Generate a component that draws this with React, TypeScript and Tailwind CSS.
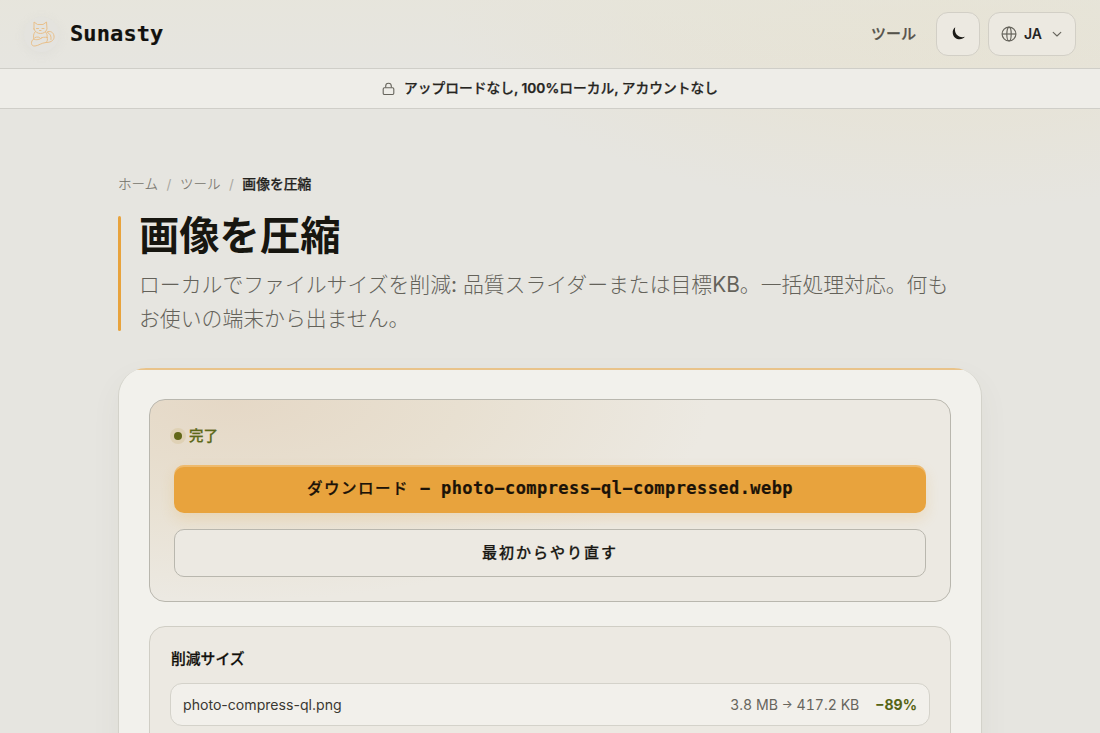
import React from "react";

const sans = "font-['Inter','Noto_Sans_CJK_JP',sans-serif]";
const mono = "font-['DejaVu_Sans_Mono','Noto_Sans_CJK_JP',monospace]";

function CatLogo() {
  return (
    <svg width="34" height="34" viewBox="0 0 34 34" fill="none" stroke="#e9c08a" strokeWidth="1" strokeLinejoin="round" strokeLinecap="round">
      <path d="M9 12 9 5l3.500 2.500h5.500L21.500 5l.5 7c-1 3-3.500 4.500-6.500 4.500S10 15 9 12z" />
      <path d="M11.500 11.500h2M17 11.500h2M14.500 13.500h1.500M10 15c-1.500 2-2 4-1 7M20.500 15c1.500 2 2 3 1.500 5" />
      <path d="M8.500 22c-3 2-3 7.500 1.500 7 4-.5 6-3 11-3.500 6 0 8.500-3 8-6.500-.5-4-4-5.500-7-4" />
      <path d="M10 20.500c2.500-1 4.500-.5 5.500 1 2-1.500 4-1.500 7-1M8.500 22c3 1.500 6 .5 8-1M22 20.500c1 2 .5 3.500-1 5" />
      <path d="M22.500 15.500c2.500 1 4 3.500 3.500 7" />
    </svg>
  );
}

function Header() {
  return (
    <header className="flex h-[69px] shrink-0 items-center border-b border-[#cfcec8] bg-linear-to-b from-[#e7e5da]/60 to-transparent pr-6 pl-6">
      <div className="flex items-center gap-[11px]">
        <div className="flex h-[35px] w-[35px] items-center justify-center rounded-full bg-[#e2e2de]/40 shadow-[0_2px_8px_rgba(210,210,206,0.3)]">
          <CatLogo />
        </div>
        <span className={`${mono} text-[22px] leading-none font-bold tracking-[0.1px] text-[#12110d] [-webkit-text-stroke:0.2px]`}>Sunasty</span>
      </div>
      <div className="ml-auto flex items-center">
        <span className="mr-5 text-[15px] font-medium text-[#55534b] [-webkit-text-stroke:0.25px]">ツール</span>
        <button className="mr-2 flex h-11 w-11 items-center justify-center rounded-xl border border-[#d2cfc6] bg-[#ece9e1]">
          <svg width="16" height="16" viewBox="0 0 16 16" fill="#1b1a16">
            <path d="M5.200 1.300C3.300 2.900 2.400 5 2.800 7.400c.5 3.600 3.500 5.900 6.900 5.900 2.100 0 4-.9 5.200-2.500C9.400 12.400 3.600 8.300 5.200 1.300z" />
          </svg>
        </button>
        <button className="flex h-11 w-[88px] items-center rounded-xl border border-[#d2cfc6] bg-[#ece9e1] pl-3">
          <svg width="16" height="16" viewBox="0 0 16 16" fill="none" stroke="#66645c" strokeWidth="1.200">
            <circle cx="8" cy="8" r="6.900" />
            <ellipse cx="8" cy="8" rx="2.200" ry="6.900" />
            <path d="M1 8h14" />
          </svg>
          <span className="ml-[7px] pb-px text-[14px] font-semibold text-[#24231f]">JA</span>
          <svg className="ml-[9px]" width="12" height="12" viewBox="0 0 12 12" fill="none" stroke="#66645c" strokeWidth="1.100" strokeLinecap="round" strokeLinejoin="round">
            <path d="m2.200 4.300 3.800 3.700 3.800-3.700" />
          </svg>
        </button>
      </div>
    </header>
  );
}

function PrivacyBar() {
  return (
    <div className="flex h-10 shrink-0 items-center justify-center gap-[9px] border-b border-[#cfcec8] bg-[#eeede8]">
      <svg width="13" height="14" viewBox="0 0 13 14" fill="none" stroke="#66645c" strokeWidth="1.100" strokeLinejoin="round">
        <rect x="1.200" y="5.700" width="10.600" height="6.800" rx="1.200" />
        <path d="M3.700 5.500V4a2.800 2.800 0 0 1 5.600 0v1.500" />
      </svg>
      <span className="pb-px text-[13.750px] font-medium whitespace-nowrap text-[#26251f] [-webkit-text-stroke:0.25px]">
        アップロードなし<span className="font-semibold">, 100%</span>ローカル<span className="font-semibold">, </span>アカウントなし
      </span>
    </div>
  );
}

function ResultPanel() {
  return (
    <section className="h-[203px] rounded-2xl border border-[#b9b7ae] bg-[#ece9e2] bg-[radial-gradient(ellipse_60%_100%_at_10%_0%,#e5d8c6_0%,#e8e0d1_48%,#ece9e2_100%)] px-6 pt-6">
      <div className="flex h-6 items-center">
        <span className="h-2 w-2 rounded-full bg-[#626718] shadow-[0_0_0_4px_#dfd1b5]" />
        <span className="ml-[7px] text-[14.500px] font-medium text-[#5b6818] [-webkit-text-stroke:0.25px]">完了</span>
      </div>
      <button className={`${mono} mt-[17px] flex h-12 w-full items-center justify-center rounded-[10px] bg-[#e8a33d] text-[17px] font-bold tracking-[0.430px] whitespace-pre text-[#1c1308] shadow-[inset_0_2px_0_rgba(255,255,255,0.25),0_6px_14px_rgba(232,163,61,0.2)]`}>
        <span className="pt-0.5 text-[15.500px] font-medium tracking-[1.500px] [-webkit-text-stroke:0.25px]">ダウンロード</span>
        <span className="[-webkit-text-stroke:0.2px]"> − photo−compress−ql−compressed.webp</span>
      </button>
      <button className="mt-4 flex h-12 w-full items-center justify-center rounded-[10px] border border-[#b9b7ae] bg-[#ece9e2] text-[15px] font-medium tracking-[2px] text-[#191813] [-webkit-text-stroke:0.25px]">
        最初からやり直す
      </button>
    </section>
  );
}

function SavingsPanel() {
  return (
    <section className="mt-6 h-[200px] rounded-2xl border border-[#d0cec5] bg-[#ece9e2] px-5 pt-5">
      <h2 className="flex h-6 items-center pl-px text-[14.800px] font-medium text-[#11100c] [-webkit-text-stroke:0.25px]">削減サイズ</h2>
      <div className="mt-3 flex h-[43px] items-center rounded-xl border border-[#d4d2ca] bg-[#f2f0eb] px-3 pt-px text-[14.100px]">
        <span className="text-[#3a3832]">photo-compress-ql.png</span>
        <span className="ml-auto flex items-center whitespace-pre text-[#67655d] tabular-nums">
          3.8 MB <span className="text-[11.500px]">→</span> 417.2 KB
        </span>
        <span className="ml-4 font-bold text-[#566415] tabular-nums">−89%</span>
      </div>
    </section>
  );
}

export default function App() {
  return (
    <div lang="ja" className={`${sans} flex h-[733px] w-[1100px] flex-col overflow-hidden bg-[#e6e5e0] bg-[radial-gradient(ellipse_500px_210px_at_940px_0px,rgba(232,222,190,0.4),rgba(232,222,190,0.2)_60%,transparent)]`}>
      <Header />
      <PrivacyBar />
      <main className="mx-auto w-[864px] pt-[63px]">
        <nav className="flex h-6 items-center text-[13.500px] text-[#76746c]">
          <span className="font-light [-webkit-text-stroke:0.15px]">ホーム</span>
          <span className="mx-[8.500px] text-[#aaa8a0]">/</span>
          <span className="font-light [-webkit-text-stroke:0.15px]">ツール</span>
          <span className="mx-[8.500px] text-[#aaa8a0]">/</span>
          <span className="text-[13.800px] font-medium text-[#24231e] [-webkit-text-stroke:0.25px]">画像を圧縮</span>
        </nav>
        <div className="mt-[20px] flex h-[115px]">
          <div className="w-[3px] rounded-sm bg-[#e8a33d]" />
          <div className="pl-[18px]">
            <h1 className="h-[41px] text-[40.300px] leading-[39px] font-bold text-[#171610]">画像を圧縮</h1>
            <p className="mt-[11px] text-[20.850px] leading-[34px] font-light whitespace-nowrap text-[#64625a]">
              ローカルでファイルサイズを削減<span className="font-normal">: </span>品質スライダーまたは目標<span className="font-normal">KB</span>。一括処理対応。何も
              <br />
              お使いの端末から出ません。
            </p>
          </div>
        </div>
        <div className="mt-[37px] rounded-t-[28px] shadow-[0_12px_30px_rgba(80,80,60,0.06)]">
          <div className="h-[380px] overflow-hidden rounded-t-[28px] border border-t-0 border-[#d3d2ca] bg-[#f2f1ec]">
            <div className="h-[2px] bg-[#e9c38a]" />
            <div className="px-[30px] pt-[29px]">
              <ResultPanel />
              <SavingsPanel />
            </div>
          </div>
        </div>
      </main>
    </div>
  );
}
